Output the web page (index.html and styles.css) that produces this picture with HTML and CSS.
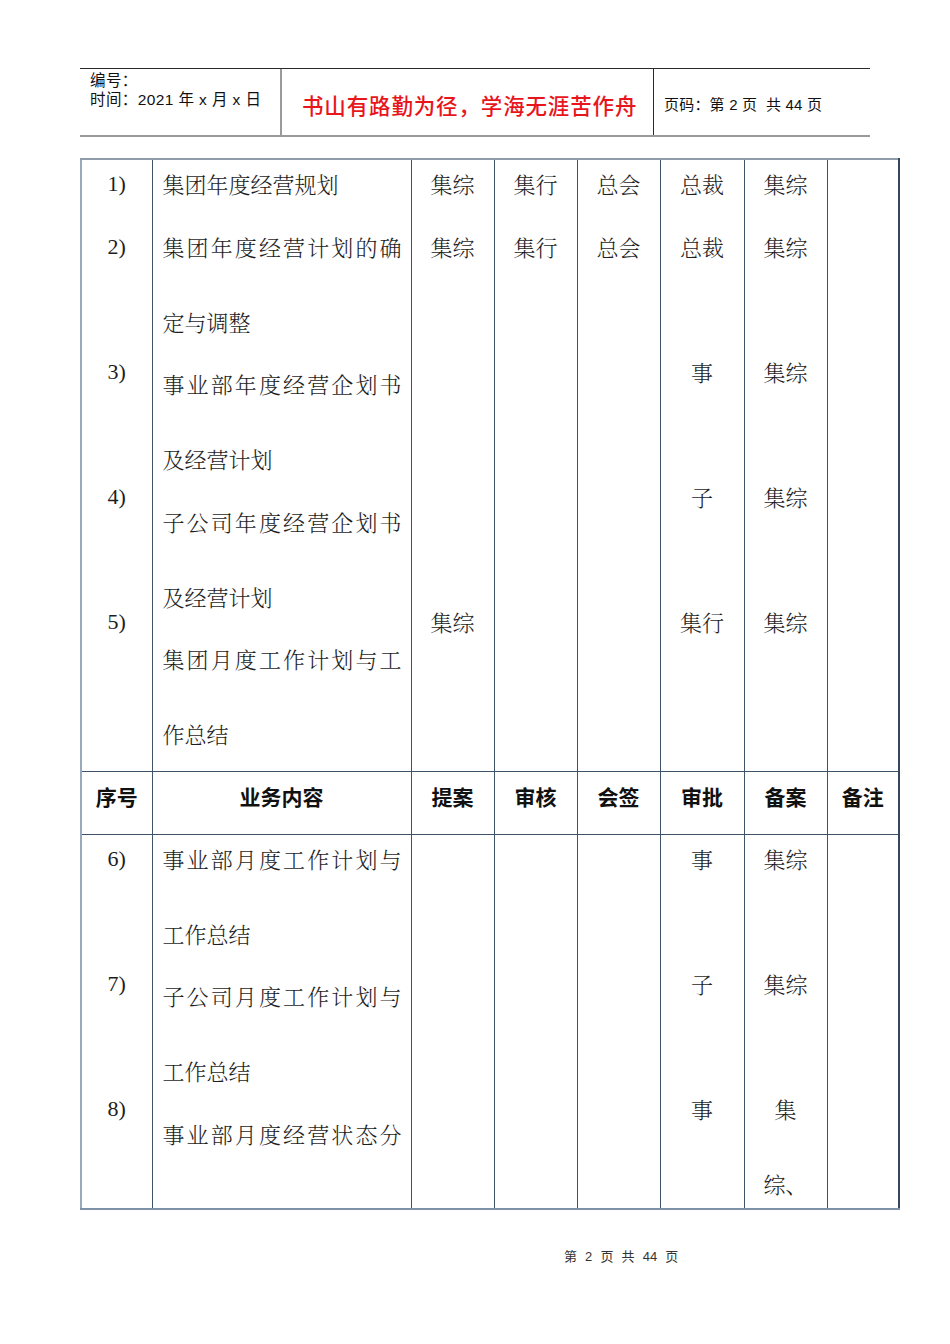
FILE: index.html
```html
<!DOCTYPE html>
<html lang="zh-CN">
<head>
<meta charset="utf-8">
<title>集团经营计划审批流程</title>
<link rel="stylesheet" href="styles.css">
</head>
<body>
<div class="page">
  <header class="doc-head">
    <div class="head-left">
      <div>编号：</div>
      <div>时间：2021 年 x 月 x 日</div>
    </div>
    <div class="head-mid">书山有路勤为径，学海无涯苦作舟</div>
    <div class="head-right">页码：第 2 页&nbsp; 共 44 页</div>
  </header>

  <table class="grid">
    <colgroup>
      <col class="c-no"><col class="c-content"><col class="c-a"><col class="c-a"><col class="c-a"><col class="c-b"><col class="c-a"><col class="c-end">
    </colgroup>
    <tbody>
      <tr class="row-top">
        <td class="num"><div class="stack">
          <p>1)</p><p>2)</p><p></p><p>3)</p><p></p><p>4)</p><p></p><p>5)</p>
        </div></td>
        <td class="text"><div class="stack">
          <p>集团年度经营规划</p>
          <p>集团年度经营计划的确定与调整</p>
          <p>事业部年度经营企划书及经营计划</p>
          <p>子公司年度经营企划书及经营计划</p>
          <p>集团月度工作计划与工作总结</p>
        </div></td>
        <td class="mid"><div class="stack">
          <p>集综</p><p>集综</p><p></p><p></p><p></p><p></p><p></p><p>集综</p>
        </div></td>
        <td class="mid"><div class="stack"><p>集行</p><p>集行</p></div></td>
        <td class="mid"><div class="stack"><p>总会</p><p>总会</p></div></td>
        <td class="mid"><div class="stack">
          <p>总裁</p><p>总裁</p><p></p><p>事</p><p></p><p>子</p><p></p><p>集行</p>
        </div></td>
        <td class="mid"><div class="stack">
          <p>集综</p><p>集综</p><p></p><p>集综</p><p></p><p>集综</p><p></p><p>集综</p>
        </div></td>
        <td class="mid last"></td>
      </tr>
      <tr class="row-head">
        <th>序号</th><th>业务内容</th><th>提案</th><th>审核</th><th>会签</th><th>审批</th><th>备案</th><th class="last">备注</th>
      </tr>
      <tr class="row-bottom">
        <td class="num"><div class="stack">
          <p>6)</p><p></p><p>7)</p><p></p><p>8)</p>
        </div></td>
        <td class="text"><div class="stack">
          <p>事业部月度工作计划与工作总结</p>
          <p>子公司月度工作计划与工作总结</p>
          <p class="just">事业部月度经营状态分</p>
        </div></td>
        <td class="mid"></td>
        <td class="mid"></td>
        <td class="mid"></td>
        <td class="mid"><div class="stack">
          <p>事</p><p></p><p>子</p><p></p><p>事</p>
        </div></td>
        <td class="mid"><div class="stack">
          <p>集综</p><p></p><p>集综</p><p></p><p>集<br>综、</p>
        </div></td>
        <td class="mid last"></td>
      </tr>
    </tbody>
  </table>

  <footer class="doc-foot">第 2 页 共 44 页</footer>
</div>
</body>
</html>
```

FILE: styles.css
```css
* { box-sizing: border-box; }

html, body {
  margin: 0;
  padding: 0;
  background: #fff;
}

body {
  font-family: "Liberation Sans", "Noto Sans CJK SC", sans-serif;
  color: #1a1a1a;
}

.page {
  width: 950px;
  padding-top: 68px;
}

/* ---------- document header ---------- */
.doc-head {
  display: flex;
  margin-left: 80px;
  width: 790px;
  height: 69px;
  border-top: 1px solid #2a2a2a;
  border-bottom: 2px solid #9a9a9a;
  font-family: "Liberation Sans", "Noto Sans CJK SC", sans-serif;
}

.head-left {
  width: 202px;
  padding: 2px 0 0 10px;
  font-size: 15.5px;
  line-height: 19px;
  color: #111;
  letter-spacing: 0.4px;
  border-right: 2px solid #9a9a9a;
}

.head-mid {
  width: 372px;
  display: flex;
  align-items: center;
  padding: 4px 0 0 20px;
  font-family: "Noto Sans CJK SC", sans-serif;
  font-size: 21.5px;
  font-weight: 500;
  color: #e8161c;
  letter-spacing: 0.85px;
  border-right: 1px solid #2a2a2a;
}

.head-right {
  flex: 1;
  display: flex;
  align-items: center;
  padding: 2px 0 0 10px;
  font-size: 15px;
  letter-spacing: 0.2px;
  color: #111;
}

/* ---------- table ---------- */
.grid {
  margin: 21px 0 0 80px;
  width: 820px;
  border-collapse: collapse;
  table-layout: fixed;
  font-family: "Noto Serif CJK SC", "Noto Sans CJK SC", serif;
  font-weight: 300;
  font-size: 22px;
  color: #1e1e1e;
}

.c-no { width: 71px; }
.c-content { width: 259px; }
.c-a { width: 83px; }
.c-b { width: 84px; }
.c-end { width: 72px; }

.grid td,
.grid th {
  border: 1px solid #3e5268;
  padding: 0;
  vertical-align: top;
  overflow: hidden;
}

.grid tr:first-child td { border-top: 2px solid #8e9cac; }
.grid tr:last-child td { border-bottom: 2px solid #7f92a8; }
.grid td:first-child,
.grid th:first-child { border-left: 2px solid #98a9bc; }
.grid .last { border-right: 2px solid #34485c; }

.row-top td { height: 612px; }
.row-bottom td { height: 375px; }

.stack {
  margin-top: -14px;
  margin-bottom: -40px;
}

.stack p {
  margin: -12.5px 0 0;
  min-height: 75px;
  line-height: 75px;
}

.stack p:first-child { margin-top: 0; }

.num {
  text-align: center;
  font-family: "Liberation Serif", "Noto Sans CJK SC", serif;
  font-weight: 400;
}

.text {
  padding: 0 9px 0 10px !important;
  text-align: justify;
}

.text .just { text-align-last: justify; }

.mid { text-align: center; }

.row-head th {
  height: 63px;
  padding-bottom: 14px;
  vertical-align: middle;
  text-align: center;
  font-family: "Noto Sans CJK SC", sans-serif;
  font-weight: 700;
  font-size: 21px;
  color: #111;
}

/* ---------- footer ---------- */
.doc-foot {
  margin-top: 37px;
  padding-left: 564px;
  font-family: "Liberation Sans", "Noto Sans CJK SC", sans-serif;
  font-size: 13px;
  line-height: 20px;
  color: #333;
  word-spacing: 4.5px;
}
```
